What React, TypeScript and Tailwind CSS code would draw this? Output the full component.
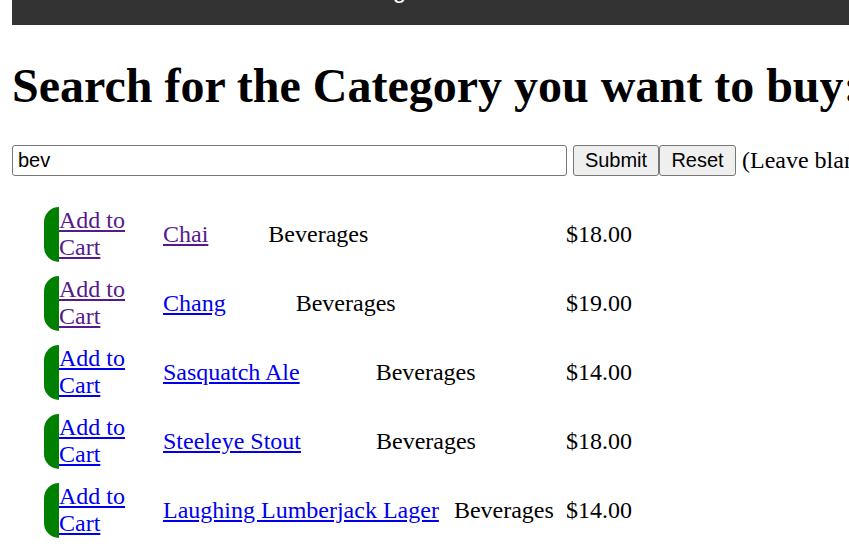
import React from 'react'

const products = [
  { name: 'Chai', price: '$18.00', gap: 'ml-[60px]', cartVisited: true, nameVisited: true },
  { name: 'Chang', price: '$19.00', gap: 'ml-[70px]', cartVisited: true, nameVisited: false },
  { name: 'Sasquatch Ale', price: '$14.00', gap: 'ml-[76px]', cartVisited: false, nameVisited: false },
  { name: 'Steeleye Stout', price: '$18.00', gap: 'ml-[75px]', cartVisited: false, nameVisited: false },
  { name: 'Laughing Lumberjack Lager', price: '$14.00', gap: 'ml-[15px]', cartVisited: false, nameVisited: false },
]

const App = () => {
  return (
    <div className="min-h-[558px] bg-white px-3 overflow-hidden font-['Liberation_Serif',serif] text-[24px] leading-[normal] text-black">
      {/* top nav, page is scrolled a bit so only the bottom shows */}
      <div className="h-[25px] -mr-3 bg-[#333333] overflow-hidden">
        <div className="-mt-[25px] leading-[30px] pl-[330px] font-['Liberation_Sans',sans-serif] text-white">
          Categories
        </div>
      </div>

      <h1 className="mt-[33px] mb-[32px] text-[48px] font-bold whitespace-nowrap">
        Search for the Category you want to buy:
      </h1>

      <form className="whitespace-nowrap flex items-center">
        <input
          type="text"
          defaultValue="bev"
          className="shrink-0 w-[555px] h-[31px] px-[5px] border border-[#767676] rounded-[3px] font-['Liberation_Sans',sans-serif] text-[20px] outline-none"
        />
        <button type="button" className="shrink-0 ml-[6px] w-[86px] h-[31px] border border-[#767676] rounded-[3px] bg-[#efefef] font-['Liberation_Sans',sans-serif] text-[20px]">
          Submit
        </button>
        <button type="reset" className="shrink-0 w-[77px] h-[31px] border border-[#767676] rounded-[3px] bg-[#efefef] font-['Liberation_Sans',sans-serif] text-[20px]">
          Reset
        </button>
        <span className="shrink-0 ml-[6px]">(Leave blank to see all categories)</span>
      </form>

      <div className="mt-[31px] flex flex-col gap-[14px] pl-[32px]">
        {products.map((p) => (
          <div key={p.name} className="flex items-center">
            <div className="flex h-[55px] shrink-0">
              <div className="w-[15px] bg-[#008000] rounded-l-[15px]" />
              <a href="#" className={`w-[104px] underline ${p.cartVisited ? 'text-[#551a8b]' : 'text-[#0000ee]'}`}>
                Add to Cart
              </a>
            </div>
            <div className="w-[403px] shrink-0 flex whitespace-nowrap">
              <a href="#" className={`underline ${p.nameVisited ? 'text-[#551a8b]' : 'text-[#0000ee]'}`}>
                {p.name}
              </a>
              <span className={p.gap}>Beverages</span>
            </div>
            <span className="shrink-0">{p.price}</span>
          </div>
        ))}
      </div>
    </div>
  )
}

export default App
